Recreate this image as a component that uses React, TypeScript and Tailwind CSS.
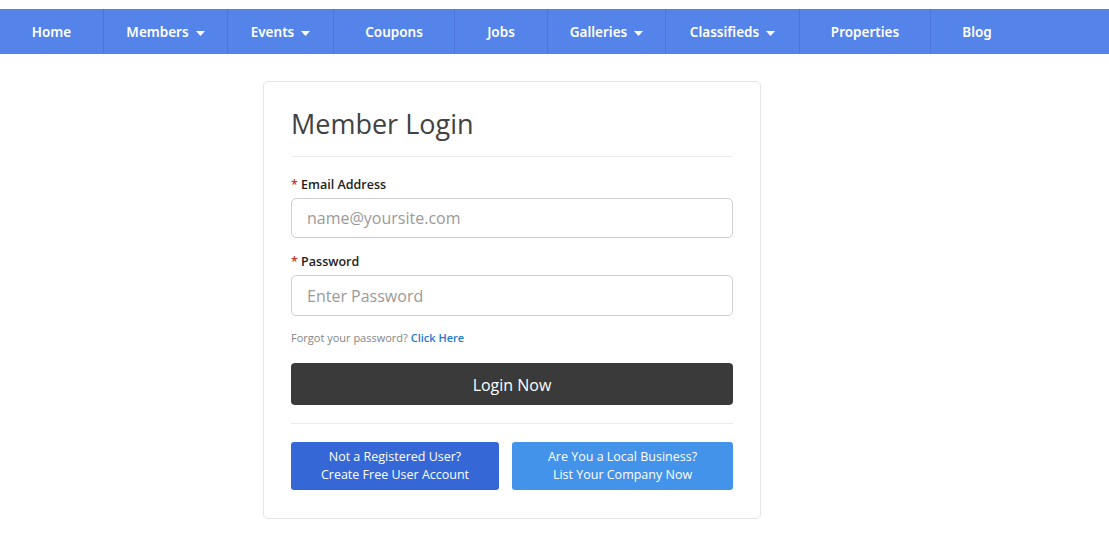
import React from "react";

const navItems: { label: string; w: number; caret?: boolean; last?: boolean }[] = [
  { label: "Home", w: 104 },
  { label: "Members", w: 124, caret: true },
  { label: "Events", w: 106, caret: true },
  { label: "Coupons", w: 121 },
  { label: "Jobs", w: 93 },
  { label: "Galleries", w: 118, caret: true },
  { label: "Classifieds", w: 134, caret: true },
  { label: "Properties", w: 131 },
  { label: "Blog", w: 92, last: true },
];

function Caret() {
  return (
    <svg width="9" height="5" viewBox="0 0 9 5" className="ml-[7px] mt-[1px]">
      <path d="M0 0 L9 0 L4.5 5 Z" fill="#ffffff" />
    </svg>
  );
}

export default function App() {
  return (
    <div className="w-[1109px] h-[543px] bg-white overflow-hidden" style={{ fontFamily: '"Open Sans", "Liberation Sans", sans-serif' }}>
      <div className="h-[9px]" />
      <nav className="h-[45px] bg-[#5484ea] flex">
        {navItems.map((it) => (
          <div
            key={it.label}
            className={`flex items-center justify-center pt-[2px] text-white text-[13.5px] font-semibold h-full ${it.last ? "" : "border-r border-[#4a76d8]"}`}
            style={{ width: it.w, fontFamily: '"Noto Sans", "Open Sans", sans-serif' }}
          >
            <span>{it.label}</span>
            {it.caret && <Caret />}
          </div>
        ))}
      </nav>
      <div className="flex pl-[263px] pt-[27px]">
        <div className="w-[498px] border border-[#e6e6e6] rounded-[5px] px-[27px] pt-[25px] pb-[28px]">
          <h1 className="text-[27px] leading-[34px] text-[#424242] font-normal">Member Login</h1>
          <div className="mt-[15px] border-t border-[#ebebeb]" />
          <div className="mt-[20px] text-[12.5px] font-semibold text-[#222] leading-[16px]">
            <span className="text-[#c0392b]">*</span> Email Address
          </div>
          <div className="mt-[5px] h-[40px] border border-[#cfcfcf] rounded-[5px] flex items-center pl-[15px] text-[16px] text-[#9a9a9a]">
            name@yoursite.com
          </div>
          <div className="mt-[16px] text-[12.5px] font-semibold text-[#222] leading-[16px]">
            <span className="text-[#c0392b]">*</span> Password
          </div>
          <div className="mt-[5px] h-[41px] border border-[#cfcfcf] rounded-[5px] flex items-center pl-[15px] text-[16px] text-[#9a9a9a]">
            Enter Password
          </div>
          <div className="mt-[14px] text-[11px] leading-[16px] text-[#858585]">
            Forgot your password? <span className="text-[#1f78d1] font-semibold">Click Here</span>
          </div>
          <div className="mt-[17px] h-[42px] pt-[2px] bg-[#3a3a3a] rounded-[4px] flex items-center justify-center text-white text-[16px]">
            Login Now
          </div>
          <div className="mt-[18px] border-t border-[#ebebeb]" />
          <div className="mt-[18px] flex gap-[13px]">
            <div className="w-[208px] h-[48px] bg-[#3567d6] rounded-[3px] flex flex-col items-center justify-center text-white text-[12.5px] leading-[18px]">
              <span>Not a Registered User?</span>
              <span>Create Free User Account</span>
            </div>
            <div className="flex-1 h-[48px] bg-[#4393ea] rounded-[3px] flex flex-col items-center justify-center text-white text-[12.5px] leading-[18px]">
              <span>Are You a Local Business?</span>
              <span>List Your Company Now</span>
            </div>
          </div>
        </div>
      </div>
    </div>
  );
}
